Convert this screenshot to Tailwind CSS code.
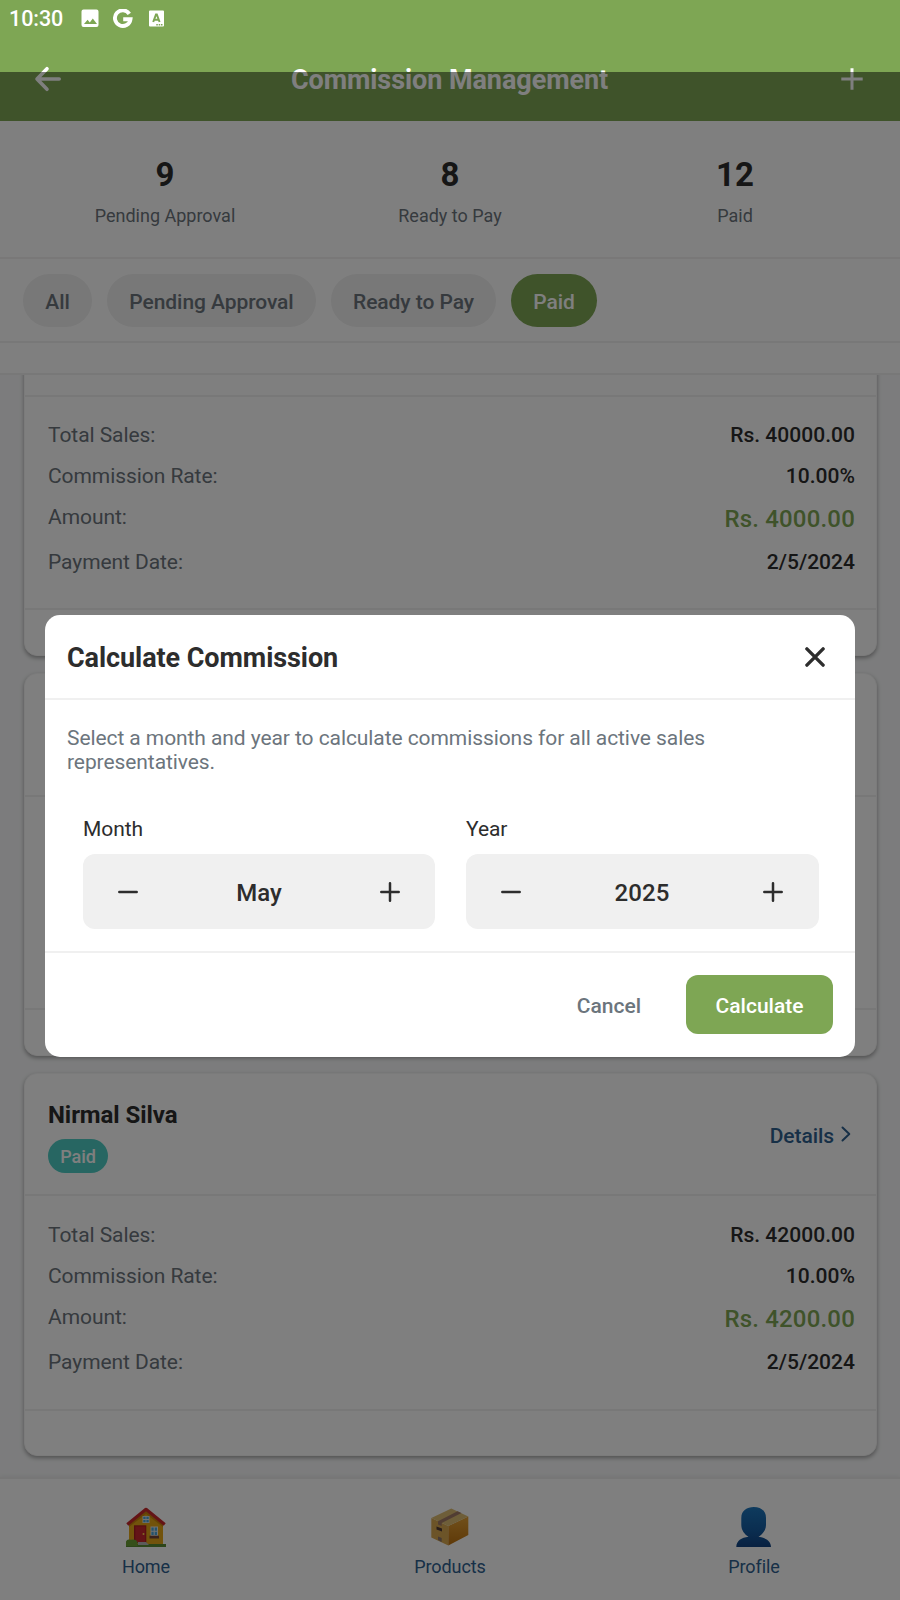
<!DOCTYPE html>
<html lang="en">
<head>
<meta charset="utf-8">
<title>Commission Management</title>
<script src="https://cdn.jsdelivr.net/npm/@tailwindcss/browser@4"></script>
</head>
<body class="relative flex h-[1600px] w-[900px] flex-col overflow-hidden bg-[#f8f9fa] font-['Roboto',sans-serif] text-[21px] leading-[25px] tracking-[-0.07px] text-[#2d2d2d]">

  <!-- App header with status bar -->
  <header class="flex h-[121px] shrink-0 flex-col bg-[#7ea654] text-white">
    <div class="flex h-[37px] items-center pl-[9px]">
      <span class="w-[72px] text-[21.5px] font-medium">10:30</span>
      <svg class="h-[19px] w-[19px]" viewBox="0 0 19 19"><path fill="#fff" fill-rule="evenodd" d="M2.5 .5h13a2 2 0 0 1 2 2v13.500a2 2 0 0 1-2 2h-13a2 2 0 0 1-2-2V2.500a2 2 0 0 1 2-2ZM3 15h13l-4.200-5.500-3 4-2.200-2.700Z"/></svg>
      <svg class="ml-[13px] h-[20px] w-[20px]" viewBox="0 0 20 20" fill="none" stroke="#fff" stroke-width="3.900"><path d="M16.300 4.900A7.800 7.800 0 1 0 17.500 10.200H10.200"/></svg>
      <svg class="ml-[16px] h-[17px] w-[15px]" viewBox="0 0 15 17"><path fill="#fff" d="M1 .500h13a1 1 0 0 1 1 1v14a1 1 0 0 1-1 1H1a1 1 0 0 1-1-1v-14a1 1 0 0 1 1-1Z"/><path fill="none" stroke="#7ea654" stroke-width="2" d="M4.200 12 7 4.500h.8L10.600 12M5.300 9.700h4.200"/><path fill="#7ea654" d="M7.300 14h1.500v1.400H7.300zM9.700 14h1.500v1.400H9.700zM12 14h1.500v1.400H12z"/></svg>
    </div>
    <div class="flex h-[84px] items-center justify-between pr-[36px] pl-[34px]">
      <svg class="h-[28px] w-[28px]" viewBox="0 0 28 28" fill="none" stroke="#fff" stroke-width="3.600" stroke-linecap="round" stroke-linejoin="round"><path d="M13 3.700 3 14l10 10.300M3 14h22.200"/></svg>
      <h1 class="mr-[3px] pt-[2px] text-[27px] leading-[32px] font-bold">Commission Management</h1>
      <svg class="h-[24px] w-[24px]" viewBox="0 0 24 24" fill="none" stroke="#fff" stroke-width="3"><path d="M12 1.300v21.400M1.300 12h21.400"/></svg>
    </div>
  </header>

  <!-- Totals -->
  <section class="grid h-[138px] shrink-0 grid-cols-3 border-b-2 border-[#f3f0f0] bg-white px-[22.5px] pt-[34px] text-center tracking-normal">
    <div><div class="text-[33px] leading-[39px] font-bold">9</div><div class="mt-[11px] text-[18px] leading-[21px] text-[#6c757d]">Pending Approval</div></div>
    <div><div class="text-[33px] leading-[39px] font-bold">8</div><div class="mt-[11px] text-[18px] leading-[21px] text-[#6c757d]">Ready to Pay</div></div>
    <div><div class="text-[33px] leading-[39px] font-bold">12</div><div class="mt-[11px] text-[18px] leading-[21px] text-[#6c757d]">Paid</div></div>
  </section>

  <!-- Filters -->
  <nav class="flex h-[84px] shrink-0 gap-[15px] border-b-2 border-[#f0f0f0] bg-white pt-[15px] pl-[23px] font-medium text-[#6c757d]">
    <span class="flex h-[53px] w-[69px] items-center justify-center rounded-[30px] bg-[#f0f0f0] pt-[4px]">All</span>
    <span class="flex h-[53px] w-[209px] items-center justify-center rounded-[30px] bg-[#f0f0f0] pt-[4px]">Pending Approval</span>
    <span class="flex h-[53px] w-[165px] items-center justify-center rounded-[30px] bg-[#f0f0f0] pt-[4px]">Ready to Pay</span>
    <span class="flex h-[53px] w-[86px] items-center justify-center rounded-[30px] bg-[#7ea654] pt-[4px] text-white">Paid</span>
  </nav>
  <div class="h-[32px] shrink-0 border-b-2 border-[#f0f0f0] bg-white"></div>

  <!-- Commission list, scrolled part-way -->
  <main class="flex min-h-0 flex-1 flex-col justify-end gap-[17px] overflow-hidden px-[24px] pb-[21px]">
    <article class="mr-[-1px] h-[383px] shrink-0 rounded-[13px] border border-[#f6f6f6] bg-white shadow-[0_2px_4px_rgba(0,0,0,0.35)]">
      <div class="h-[123px] border-b-2 border-[#f0f0f0]"></div>
      <div class="flex h-[213px] flex-col gap-[16px] border-b-2 border-[#f0f0f0] pt-[26px] pr-[21px] pl-[23px]">
        <div class="flex justify-between"><span class="text-[#6c757d]">Total Sales:</span><span class="font-medium tracking-[0.03px]">Rs. 40000.00</span></div>
        <div class="flex justify-between"><span class="text-[#6c757d]">Commission Rate:</span><span class="font-medium tracking-[0.03px]">10.00%</span></div>
        <div class="flex h-[29px] justify-between"><span class="text-[#6c757d]">Amount:</span><span class="text-[24px] leading-[28px] font-medium tracking-[0.18px] text-[#7ea654]">Rs. 4000.00</span></div>
        <div class="flex justify-between"><span class="text-[#6c757d]">Payment Date:</span><span class="font-medium tracking-[0.03px]">2/5/2024</span></div>
      </div>
    </article>
    <article class="mr-[-1px] h-[383px] shrink-0 rounded-[13px] border border-[#f6f6f6] bg-white shadow-[0_2px_4px_rgba(0,0,0,0.35)]">
      <div class="h-[123px] border-b-2 border-[#f0f0f0]"></div>
      <div class="h-[213px] border-b-2 border-[#f0f0f0]"></div>
    </article>
    <article class="mr-[-1px] h-[383px] shrink-0 rounded-[13px] border border-[#f6f6f6] bg-white shadow-[0_2px_4px_rgba(0,0,0,0.35)]">
      <div class="flex h-[122px] items-center justify-between border-b-2 border-[#f0f0f0] pt-[4px] pr-[25px] pl-[23px]">
        <div class="pt-[2px]">
          <h2 class="text-[24px] leading-[28px] font-bold">Nirmal Silva</h2>
          <span class="mt-[10px] flex h-[34px] w-[60px] items-center justify-center rounded-full bg-[#4ecdc4] text-[18px] leading-[21px] font-medium text-white">Paid</span>
        </div>
        <a class="flex items-center gap-[7px] font-medium text-[#2e608f]">Details
          <svg class="mb-[4px] h-[16px] w-[10px]" viewBox="0 0 10 16" fill="none" stroke="currentColor" stroke-width="2" stroke-linecap="round" stroke-linejoin="round"><path d="M1.500 1.500 8.300 8l-6.800 6.500"/></svg>
        </a>
      </div>
      <div class="flex h-[215px] flex-col gap-[16px] border-b-2 border-[#f0f0f0] pt-[27px] pr-[21px] pl-[23px]">
        <div class="flex justify-between"><span class="text-[#6c757d]">Total Sales:</span><span class="font-medium tracking-[0.03px]">Rs. 42000.00</span></div>
        <div class="flex justify-between"><span class="text-[#6c757d]">Commission Rate:</span><span class="font-medium tracking-[0.03px]">10.00%</span></div>
        <div class="flex h-[29px] justify-between"><span class="text-[#6c757d]">Amount:</span><span class="text-[24px] leading-[28px] font-medium tracking-[0.18px] text-[#7ea654]">Rs. 4200.00</span></div>
        <div class="flex justify-between"><span class="text-[#6c757d]">Payment Date:</span><span class="font-medium tracking-[0.03px]">2/5/2024</span></div>
      </div>
    </article>
  </main>

  <!-- Bottom tabs -->
  <footer class="flex h-[123px] shrink-0 justify-between border-t-2 border-[#eeeeee] bg-white px-[86px] pt-[28px] text-[18px] leading-[21px] text-[#2e608f] shadow-[0_-1px_4px_rgba(0,0,0,0.06)]">
    <div class="flex w-[120px] flex-col items-center gap-[9px]">
      <svg class="h-[40px] w-[40px]" viewBox="0 0 40 40">
        <path fill="#e5a618" d="M3 16 20 3l17 13v22H3z"/><path fill="#c9840c" d="M3 17 20 4l17 13v3L20 7 3 20z"/>
        <path fill="none" stroke="#c9282c" stroke-width="3.200" stroke-linejoin="round" d="M1.300 17.500 20 2.300l18.700 15.200"/>
        <path fill="#e6e6e6" d="M16.500 9h7v7h-7z"/><path fill="#48a6dc" d="M17.300 9.800h2.300v2.300h-2.300zm3.100 0h2.300v2.300h-2.300zm-3.100 3.100h2.300v2.300h-2.300zm3.100 0h2.300v2.300h-2.300z"/>
        <path fill="#a81c22" d="M8 18.300h12.300V36H8z"/><path fill="#c9282e" d="M9.300 19.500h10V35h-10z"/><circle cx="17.500" cy="27" r="1" fill="#ffd34a"/>
        <path fill="#e6e6e6" d="M24.500 19.500H32V29h-7.500z"/><path fill="#48a6dc" d="M25.400 20.500h2.300v3.300h-2.300zm3.300 0H31v3.300h-2.300zm-3.300 4.200h2.300V28h-2.300zm3.300 0H31V28h-2.300z"/>
        <path fill="#744436" d="M23.500 28.700H33v2.800h-9.500z"/><path fill="#598b32" d="M0 37h40v3H0z"/><path fill="#b7b7b7" d="M12 35h8l3 3H12z"/>
        <path fill="#6b9e35" d="M0 39v-4.500q1-3 5-1.700 5-1 6.500 2.200v4z"/>
      </svg>
      <span>Home</span>
    </div>
    <div class="flex w-[120px] flex-col items-center gap-[9px]">
      <svg class="h-[40px] w-[40px]" viewBox="0 0 40 40">
        <defs><linearGradient id="side" x2="0" y2="1"><stop stop-color="#e2a035"/><stop offset="1" stop-color="#bd7210"/></linearGradient></defs>
        <path fill="#d8a851" d="m1.300 11 17 8V38.500l-17-8z"/><path fill="url(#side)" d="m18.300 19 20-9.500V28l-20 10.500z"/>
        <path fill="#ddbd72" d="m1.300 11 20-9.500 17 8-20 9.500z"/><path fill="#a37b66" d="m8 14.300 19.500-10L31.500 6l-19.800 10v3L8 17.500z"/>
        <path fill="#513a35" d="m6.500 19.500 5.500 2v3l-5.500-2z"/><path fill="#8d7468" d="m8 29.500 3.700 1.500v4L8 33z"/>
      </svg>
      <span>Products</span>
    </div>
    <div class="flex w-[120px] flex-col items-center gap-[9px]">
      <svg class="h-[40px] w-[36px]" viewBox="0 0 36 40">
        <defs><linearGradient id="bust" gradientUnits="userSpaceOnUse" x1="0" y1="0" x2="0" y2="40"><stop stop-color="#1d76bc"/><stop offset=".6" stop-color="#155ba0"/><stop offset="1" stop-color="#114282"/></linearGradient></defs>
        <path fill="url(#bust)" d="M17.800 0C24.500 0 30 3.500 30 11v7c0 5-3.500 9.500-7.500 11.800 7 .7 12.500 4.200 12.500 10.200H.300c0-6 5.200-9.500 12.200-10.200C8.500 27.500 5.300 23 5.300 18v-7C5.300 3.500 11 0 17.800 0Z"/>
      </svg>
      <span>Profile</span>
    </div>
  </footer>

  <!-- Modal backdrop and dialog -->
  <div class="absolute inset-x-0 top-[72px] bottom-0 flex flex-col items-center bg-black/50 pt-[543px]">
    <section class="flex h-[442px] w-[810px] flex-col rounded-[15px] bg-white">
      <div class="flex h-[85px] items-center justify-between border-b-2 border-[#f0f0f0] px-[22px]">
        <h2 class="pt-[2px] text-[27px] leading-[32px] font-bold">Calculate Commission</h2>
        <svg class="mr-[8px] h-[20px] w-[20px]" viewBox="0 0 20 20" fill="none" stroke="#2d2d2d" stroke-width="3.400" stroke-linecap="round"><path d="m1.900 1.900 16.200 16.200m0-16.200L1.900 18.100"/></svg>
      </div>
      <div class="h-[253px] border-b-2 border-[#f0f0f0] px-[22px] pt-[26px]">
        <p class="leading-[24px] tracking-[-0.08px] text-[#6c757d]">Select a month and year to calculate commissions for all active sales<br>representatives.</p>
        <div class="mt-[43px] flex gap-[31px] pr-[14px] pl-[16px]">
          <div class="w-[352px]">
            <div>Month</div>
            <div class="mt-[12px] flex h-[75px] items-center justify-between rounded-[12px] bg-[#f0f0f0] px-[35px]">
              <svg class="h-[20px] w-[20px]" viewBox="0 0 20 20" stroke="#2d2d2d" stroke-width="2.500" stroke-linecap="round"><path d="M1.300 10h17.400"/></svg>
              <span class="pt-[3px] text-[24px] leading-[28px] font-medium">May</span>
              <svg class="h-[20px] w-[20px]" viewBox="0 0 20 20" stroke="#2d2d2d" stroke-width="2.500" stroke-linecap="round"><path d="M1.300 10h17.400M10 1.300v17.400"/></svg>
            </div>
          </div>
          <div class="w-[353px]">
            <div>Year</div>
            <div class="mt-[12px] flex h-[75px] items-center justify-between rounded-[12px] bg-[#f0f0f0] pr-[36px] pl-[35px]">
              <svg class="h-[20px] w-[20px]" viewBox="0 0 20 20" stroke="#2d2d2d" stroke-width="2.500" stroke-linecap="round"><path d="M1.300 10h17.400"/></svg>
              <span class="pt-[3px] text-[24px] leading-[28px] font-medium tracking-[0.1px]">2025</span>
              <svg class="h-[20px] w-[20px]" viewBox="0 0 20 20" stroke="#2d2d2d" stroke-width="2.500" stroke-linecap="round"><path d="M1.300 10h17.400M10 1.300v17.400"/></svg>
            </div>
          </div>
        </div>
      </div>
      <div class="flex flex-1 items-start justify-end gap-[45px] px-[22px] pt-[22px] font-medium tracking-normal">
        <button class="h-[59px] pt-[4px] text-[#6c757d]">Cancel</button>
        <button class="h-[59px] w-[147px] rounded-[12px] bg-[#7ea654] pt-[4px] text-white">Calculate</button>
      </div>
    </section>
  </div>
</body>
</html>
